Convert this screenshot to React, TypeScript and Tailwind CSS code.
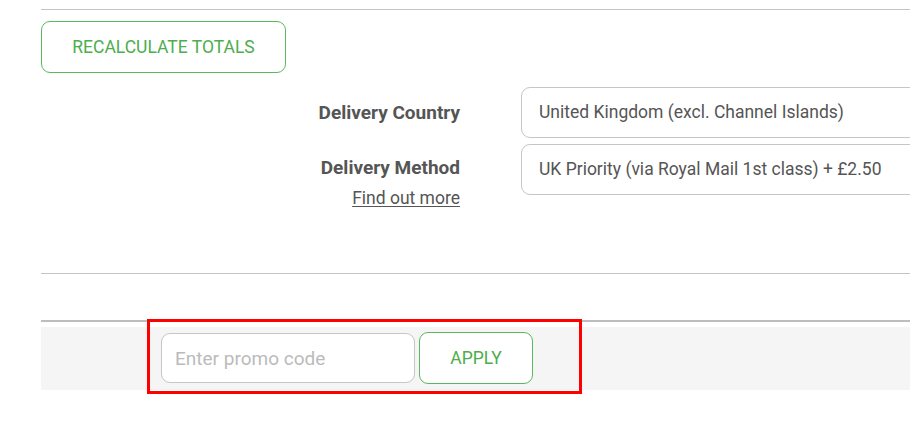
import React from 'react';

const App = () => {
    return (
        <div className="relative w-[910px] h-[422px] overflow-hidden bg-white font-['Roboto',sans-serif]">
            <div className="pl-[41px] w-[1000px]">
                <div className="mt-[9px] border-t border-[#c4c4c4]" />

                <button className="mt-[11px] w-[245px] h-[52px] border border-[#5cb85c] rounded-[9px] text-[17.5px] text-[#4cae4c] bg-white">
                    RECALCULATE TOTALS
                </button>

                <div className="mt-[14px] grid grid-cols-[419px_440px] gap-x-[61px] gap-y-[6px]">
                    <div className="self-center text-right text-[19px] leading-[22px] font-bold text-[#555]">
                        Delivery Country
                    </div>
                    <div className="h-[51px] border border-[#c6c6c6] rounded-[9px] px-[17px] flex items-center text-[17.5px] text-[#555]">
                        United Kingdom (excl. Channel Islands)
                    </div>

                    <div className="flex flex-col items-end pt-[13px]">
                        <span className="text-[19px] leading-[22px] font-bold text-[#555]">Delivery Method</span>
                        <a className="mt-[9px] text-[17.5px] leading-[20px] text-[#555] underline underline-offset-2">Find out more</a>
                    </div>
                    <div className="self-start h-[51px] border border-[#c6c6c6] rounded-[9px] px-[17px] flex items-center text-[17.5px] text-[#555]">
                        UK Priority (via Royal Mail 1st class) + £2.50
                    </div>
                </div>

                <div className="mt-[65px] border-t border-[#c4c4c4]" />

                <div className="mt-[46px] border-t-2 border-[#bdbdbd]" />

                <div className="mt-[5px] h-[63px] bg-[#f5f5f5] flex items-start gap-[4px] pl-[120px] pt-[5px]">
                    <input
                        placeholder="Enter promo code"
                        className="mt-[1px] w-[254px] h-[50px] bg-white border border-[#c6c6c6] rounded-[9px] px-[13px] text-[19px] text-[#555] placeholder:text-[#bbb] outline-none"
                    />
                    <button className="w-[114px] h-[52px] border border-[#5cb85c] rounded-[9px] text-[17.5px] text-[#4cae4c] bg-white">
                        APPLY
                    </button>
                </div>
            </div>

            {/* highlight box */}
            <div className="absolute left-[147px] top-[319px] w-[435px] h-[75px] border-[3px] border-[#ff0000]" />
        </div>
    );
};

export default App;
